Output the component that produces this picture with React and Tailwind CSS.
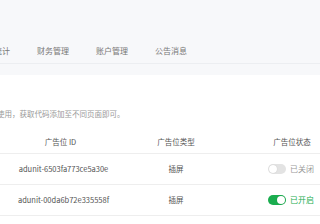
import React from "react";

const navItems = ["数据统计", "财务管理", "账户管理", "公告消息"];

const units = [
  { id: "adunit-6503fa773ce5a30e", type: "插屏", on: false },
  { id: "adunit-00da6b72e335558f", type: "插屏", on: true },
];

const Toggle = ({ on }) => (
  <div
    className={`relative w-[18px] h-[10px] rounded-full ${on ? "bg-[#1aad4f]" : "bg-[#e3e3e3]"}`}
  >
    <div
      className={`absolute top-[1px] w-[8px] h-[8px] rounded-full bg-white shadow-[0_0_1px_rgba(0,0,0,0.2)] ${
        on ? "right-[1px]" : "left-[1px]"
      }`}
    />
  </div>
);

const App = () => {
  return (
    <div
      className="w-[320px] h-[224px] overflow-hidden bg-white text-[#555]"
      style={{ fontFamily: '"Noto Sans CJK SC", "Noto Sans", sans-serif' }}
    >
      {/* top nav */}
      <div className="bg-[#f7f8fa]">
        <div className="h-[38px]" />
        <div className="h-[25px] flex items-center gap-[27px] ml-[-22px] text-[8px] text-[#777] whitespace-nowrap">
          {navItems.map((item) => (
            <span key={item}>{item}</span>
          ))}
        </div>
        <div className="h-[1px] bg-[#eceef1]" />
        <div className="h-[11px]" />
      </div>

      {/* content */}
      <div className="bg-white">
        <div className="mt-[34px] h-[10px] leading-[10px] ml-[-3px] text-[7.5px] text-[#999] whitespace-nowrap">
          使用，获取代码添加至不同页面即可。
        </div>

        <div className="mt-[11px] w-[360px]">
          <div className="grid grid-cols-[121px_110px_122px] h-[24px] items-center border-b border-[#eeeeee] text-[7.5px] text-[#555]">
            <span className="text-center">广告位 ID</span>
            <span className="text-center">广告位类型</span>
            <span className="text-center">广告位状态</span>
          </div>
          {units.map((u) => (
            <div
              key={u.id}
              className="grid grid-cols-[121px_110px_122px] h-[31px] items-center border-b border-[#eeeeee] text-[7.5px] text-[#555]"
            >
              <span className="text-center pl-[6px]">{u.id}</span>
              <span className="text-center">{u.type}</span>
              <div className="flex items-center pl-[37px] gap-[4px]">
                <Toggle on={u.on} />
                <span className={u.on ? "text-[#1aad4f] text-[8px]" : "text-[#999] text-[8px]"}>
                  {u.on ? "已开启" : "已关闭"}
                </span>
              </div>
            </div>
          ))}
        </div>
      </div>
    </div>
  );
};

export default App;
